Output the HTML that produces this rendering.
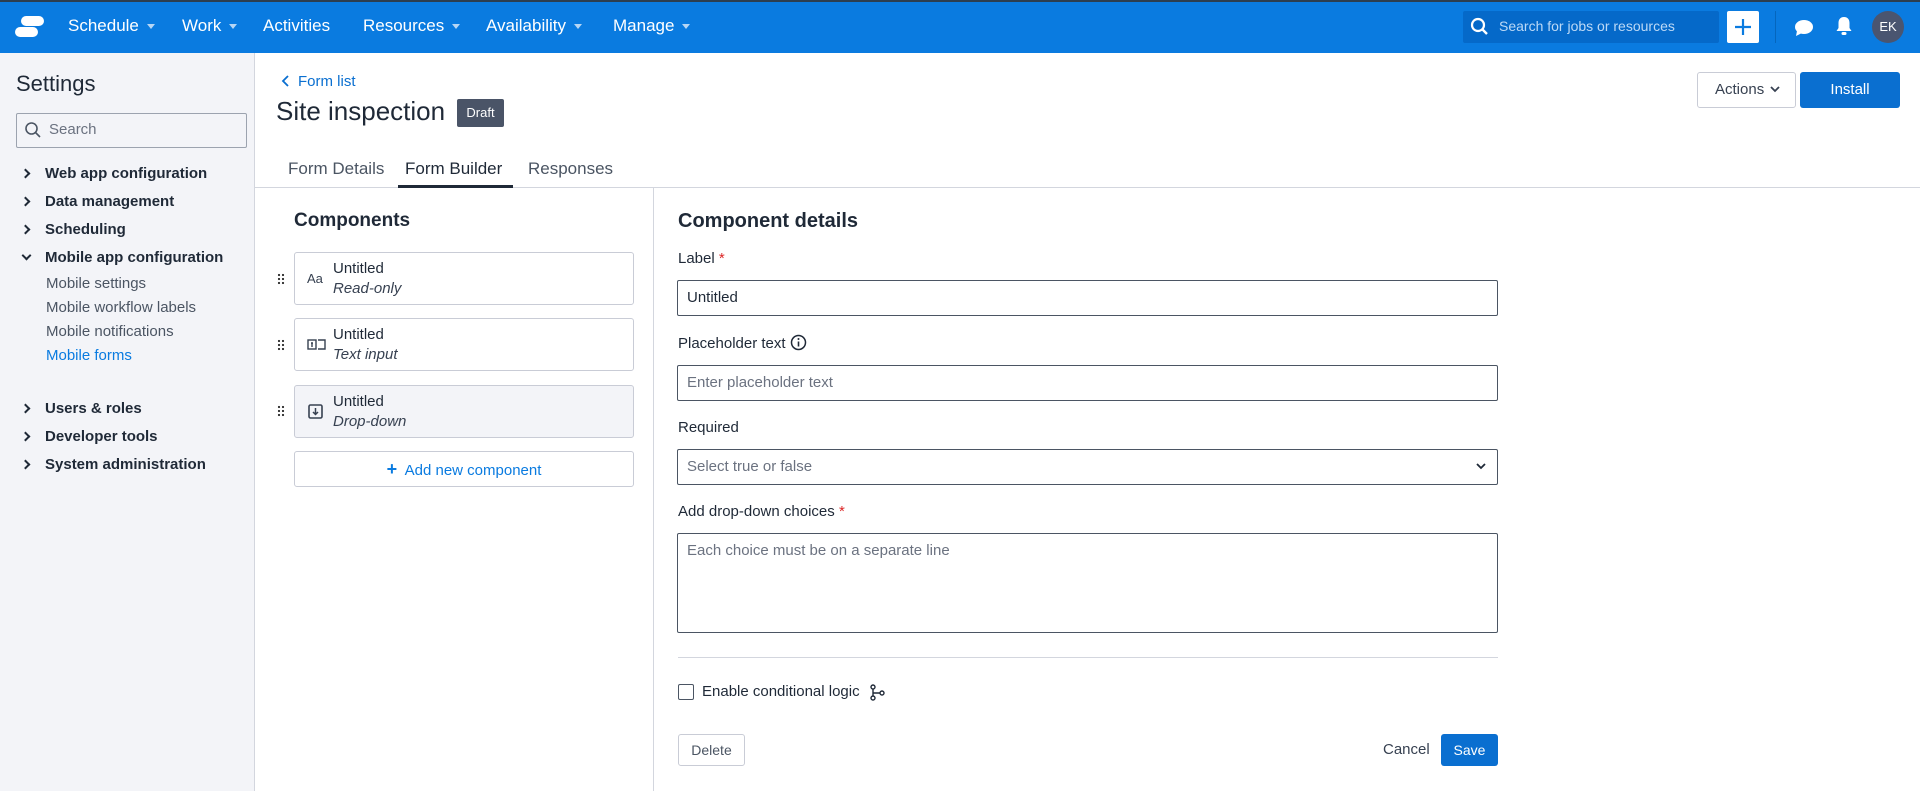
<!DOCTYPE html>
<html><head><meta charset="utf-8"><style>
*{box-sizing:border-box;margin:0;padding:0}
body{width:1920px;height:791px;overflow:hidden;font-family:"Liberation Sans",sans-serif;color:#1f2937;background:#fff;position:relative}
.abs{position:absolute}
.top{left:0;top:0;width:1920px;height:53px;background:#0a7be0;border-top:2px solid #2c3e50}
.nav{color:#fff;font-size:17px;top:16px}
.caret{display:inline-block;width:0;height:0;border-left:4px solid transparent;border-right:4px solid transparent;border-top:5px solid #b6d6f5;margin-left:8px;vertical-align:middle}
.side{left:0;top:53px;width:255px;height:738px;background:#f3f4f8;border-right:1px solid #d3d6de}
.si{left:22px;font-size:15px;font-weight:bold;color:#1f2937}
.si:before{content:"";position:absolute;left:0;top:5px;width:5px;height:5px;border-right:2px solid #1f2937;border-top:2px solid #1f2937;transform:rotate(45deg)}
.si.open:before{transform:rotate(135deg);top:3px;left:1px}
.si span{margin-left:23px}
.sub{left:46px;font-size:15px;color:#4b5563}
.card{left:294px;width:340px;border:1px solid #c9ccd6;border-radius:3px;background:#fff;height:53px}
.card .t{position:absolute;left:38px;top:7px;font-size:15px;color:#1f2937}
.card .s{position:absolute;left:38px;top:27px;font-size:15px;font-style:italic;color:#374151}
.grip{left:277px;width:8px;height:12px;background-image:radial-gradient(circle,#333 1px,transparent 1.3px);background-size:4px 4px}
.lbl{left:678px;font-size:15px;color:#1f2937}
.inp{left:677px;width:821px;border:1px solid #4b5563;border-radius:2px;font-size:15px;color:#6b7280;padding-left:9px}
.req{color:#dc2626}
</style></head><body>
<div class="abs top"></div>
<svg class="abs" style="left:15px;top:16px" width="29" height="22" viewBox="0 0 29 22"><rect x="6" y="0" width="23" height="10" rx="5" fill="#fff"/><rect x="0" y="11" width="23" height="10" rx="5" fill="#fff"/></svg>
<div class="abs nav" style="left:68px">Schedule<span class="caret"></span></div>
<div class="abs nav" style="left:182px">Work<span class="caret"></span></div>
<div class="abs nav" style="left:263px">Activities</div>
<div class="abs nav" style="left:363px">Resources<span class="caret"></span></div>
<div class="abs nav" style="left:486px">Availability<span class="caret"></span></div>
<div class="abs nav" style="left:613px">Manage<span class="caret"></span></div>
<div class="abs" style="left:1463px;top:11px;width:256px;height:32px;background:#0569c9;border-radius:2px"></div>
<svg class="abs" style="left:1470px;top:17px" width="20" height="20" viewBox="0 0 20 20"><circle cx="8" cy="8" r="6" fill="none" stroke="#fff" stroke-width="2.2"/><path d="M12.5 12.5L17 17" stroke="#fff" stroke-width="2.4"/></svg>
<div class="abs" style="left:1499px;top:18px;font-size:14px;color:#bcd9f6">Search for jobs or resources</div>
<div class="abs" style="left:1727px;top:11px;width:32px;height:32px;background:#fff;border-radius:2px"></div>
<svg class="abs" style="left:1733px;top:17px" width="20" height="20"><path d="M10 2V18M2 10H18" stroke="#0a7be0" stroke-width="2.2"/></svg>
<div class="abs" style="left:1775px;top:11px;width:1px;height:32px;background:#0566bd"></div>
<svg class="abs" style="left:1794px;top:19px" width="20" height="18" viewBox="0 0 20 18"><ellipse cx="10" cy="8" rx="9" ry="7" fill="#fff"/><path d="M3 12L2 17L8 14Z" fill="#fff"/></svg>
<svg class="abs" style="left:1835px;top:16px" width="18" height="20" viewBox="0 0 18 20"><path d="M9 1C5 1 3.5 4 3.5 7V12L1.5 15H16.5L14.5 12V7C14.5 4 13 1 9 1Z" fill="#fff"/><rect x="6.5" y="16" width="5" height="3" rx="1.5" fill="#fff"/></svg>
<div class="abs" style="left:1872px;top:11px;width:32px;height:32px;border-radius:50%;background:#4a5570;color:#fff;font-size:13px;text-align:center;line-height:32px">EK</div>

<div class="abs side"></div>
<div class="abs" style="left:16px;top:71px;font-size:22px;color:#1f2937">Settings</div>
<div class="abs" style="left:16px;top:113px;width:231px;height:35px;border:1px solid #9ca3af;border-radius:2px;background:#f3f4f8"></div>
<svg class="abs" style="left:24px;top:121px" width="18" height="20"><circle cx="7.5" cy="7.5" r="5.5" fill="none" stroke="#4b5563" stroke-width="1.6"/><path d="M11.5 11.5L16 16" stroke="#4b5563" stroke-width="1.6"/></svg>
<div class="abs" style="left:49px;top:121px;font-size:15px;color:#6b7280">Search</div>
<div class="abs si" style="top:165px"><span>Web app configuration</span></div>
<div class="abs si" style="top:193px"><span>Data management</span></div>
<div class="abs si" style="top:221px"><span>Scheduling</span></div>
<div class="abs si open" style="top:249px"><span>Mobile app configuration</span></div>
<div class="abs sub" style="top:275px">Mobile settings</div>
<div class="abs sub" style="top:299px">Mobile workflow labels</div>
<div class="abs sub" style="top:323px">Mobile notifications</div>
<div class="abs sub" style="top:347px;color:#0a7be0">Mobile forms</div>
<div class="abs si" style="top:400px"><span>Users &amp; roles</span></div>
<div class="abs si" style="top:428px"><span>Developer tools</span></div>
<div class="abs si" style="top:456px"><span>System administration</span></div>

<svg class="abs" style="left:281px;top:75px" width="10" height="12"><path d="M7 1L2 6L7 11" fill="none" stroke="#0a6fd0" stroke-width="1.8"/></svg>
<div class="abs" style="left:298px;top:73px;font-size:15px;color:#0a6fd0">Form list</div>
<div class="abs" style="left:276px;top:96px;font-size:26px;color:#1f2937">Site inspection</div>
<div class="abs" style="left:457px;top:99px;width:47px;height:28px;background:#4a5467;border-radius:2px;color:#fff;font-size:13px;text-align:center;line-height:28px">Draft</div>
<div class="abs" style="left:1697px;top:72px;width:99px;height:36px;border:1px solid #c9ccd6;border-radius:3px;font-size:15px;color:#374151;line-height:34px;padding-left:17px">Actions</div>
<svg class="abs" style="left:1770px;top:86px" width="10" height="8"><path d="M1 1L5 5L9 1" fill="none" stroke="#374151" stroke-width="1.8"/></svg>
<div class="abs" style="left:1800px;top:72px;width:100px;height:36px;background:#0a6fd0;border-radius:3px;color:#fff;font-size:15px;text-align:center;line-height:36px">Install</div>

<div class="abs" style="left:288px;top:159px;font-size:17px;color:#4b5563">Form Details</div>
<div class="abs" style="left:405px;top:159px;font-size:17px;color:#1f2937">Form Builder</div>
<div class="abs" style="left:528px;top:159px;font-size:17px;color:#4b5563">Responses</div>
<div class="abs" style="left:255px;top:187px;width:1665px;height:1px;background:#d3d6de"></div>
<div class="abs" style="left:398px;top:185px;width:115px;height:3px;background:#1f2937"></div>
<div class="abs" style="left:653px;top:188px;width:1px;height:603px;background:#d3d6de"></div>

<div class="abs" style="left:294px;top:210px;font-size:19px;font-weight:bold;color:#1f2937">Components</div>
<div class="abs card" style="top:252px"><span class="abs" style="left:12px;top:18px;font-size:13px;color:#374151">Aa</span><div class="t">Untitled</div><div class="s">Read-only</div></div>
<div class="abs card" style="top:318px"><svg class="abs" style="left:12px;top:19px" width="20" height="14"><rect x="1" y="2" width="8" height="9" fill="none" stroke="#374151" stroke-width="1.4"/><path d="M11 2H18V11H11M4 5H6M5 5V9" fill="none" stroke="#374151" stroke-width="1.4"/></svg><div class="t">Untitled</div><div class="s">Text input</div></div>
<div class="abs card" style="top:385px;background:#f3f4f8"><svg class="abs" style="left:13px;top:18px" width="16" height="16"><rect x="1" y="1" width="13" height="13" rx="1.5" fill="none" stroke="#374151" stroke-width="1.6"/><path d="M7.5 4V10M5 8L7.5 10.5L10 8" fill="none" stroke="#374151" stroke-width="1.5"/></svg><div class="t">Untitled</div><div class="s">Drop-down</div></div>
<div class="abs grip" style="top:273px"></div>
<div class="abs grip" style="top:339px"></div>
<div class="abs grip" style="top:405px"></div>
<div class="abs" style="left:294px;top:451px;width:340px;height:36px;border:1px solid #c9ccd6;border-radius:3px;text-align:center;line-height:34px;font-size:15px;color:#0a7be0"><b style="font-size:18px;font-weight:bold">+</b>&nbsp; Add new component</div>

<div class="abs" style="left:678px;top:210px;font-size:20px;font-weight:bold;color:#1f2937">Component details</div>
<div class="abs lbl" style="top:250px">Label <span class="req">*</span></div>
<div class="abs inp" style="top:280px;height:36px;line-height:34px;color:#1f2937">Untitled</div>
<div class="abs lbl" style="top:335px">Placeholder text</div>
<svg class="abs" style="left:790px;top:334px" width="17" height="17"><circle cx="8.5" cy="8.5" r="7" fill="none" stroke="#1f2937" stroke-width="1.5"/><path d="M8.5 7.5V12.5" stroke="#1f2937" stroke-width="1.6"/><circle cx="8.5" cy="5" r="1" fill="#1f2937"/></svg>
<div class="abs inp" style="top:365px;height:36px;line-height:34px">Enter placeholder text</div>
<div class="abs lbl" style="top:419px">Required</div>
<div class="abs inp" style="top:449px;height:36px;line-height:34px">Select true or false</div>
<svg class="abs" style="left:1476px;top:463px" width="10" height="8"><path d="M1 1L5 5L9 1" fill="none" stroke="#1f2937" stroke-width="1.8"/></svg>
<div class="abs lbl" style="top:503px">Add drop-down choices <span class="req">*</span></div>
<div class="abs inp" style="top:533px;height:100px;padding-top:8px">Each choice must be on a separate line</div>
<div class="abs" style="left:678px;top:657px;width:820px;height:1px;background:#d3d6de"></div>
<div class="abs" style="left:678px;top:684px;width:16px;height:16px;border:1.5px solid #4b5563;border-radius:2px"></div>
<div class="abs lbl" style="left:702px;top:683px">Enable conditional logic</div>
<svg class="abs" style="left:869px;top:684px" width="16" height="17"><circle cx="4" cy="3" r="2" fill="none" stroke="#1f2937" stroke-width="1.4"/><circle cx="4" cy="14" r="2" fill="none" stroke="#1f2937" stroke-width="1.4"/><circle cx="13" cy="9" r="2" fill="none" stroke="#1f2937" stroke-width="1.4"/><path d="M4 5V12M4 9H11" stroke="#1f2937" stroke-width="1.4"/></svg>
<div class="abs" style="left:678px;top:734px;width:67px;height:32px;border:1px solid #c9ccd6;border-radius:3px;font-size:14px;color:#4b5563;text-align:center;line-height:30px">Delete</div>
<div class="abs" style="left:1383px;top:741px;font-size:15px;color:#374151">Cancel</div>
<div class="abs" style="left:1441px;top:734px;width:57px;height:32px;background:#0a6fd0;border-radius:3px;color:#fff;font-size:14px;text-align:center;line-height:32px">Save</div>
</body></html>
